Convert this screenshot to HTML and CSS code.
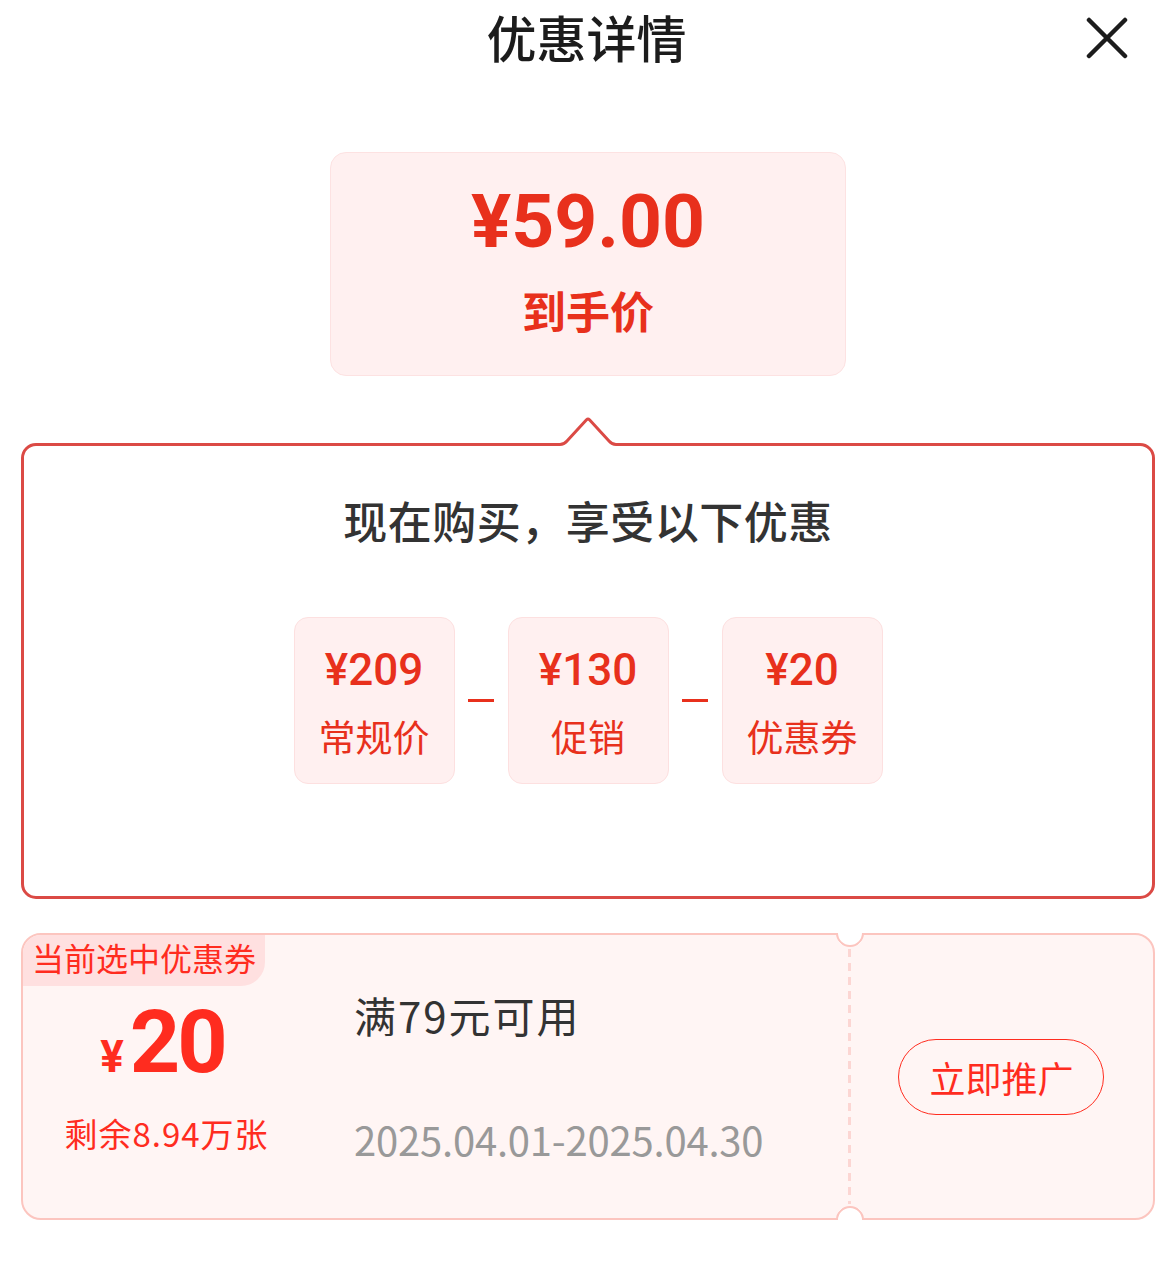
FILE: index.html
```html
<!DOCTYPE html>
<html lang="zh-CN">
<head>
<meta charset="UTF-8" />
<meta name="viewport" content="width=device-width, initial-scale=1" />
<title>优惠详情</title>
<link rel="stylesheet" href="styles.css">
</head>
<body>

<div class="sheet">
  <header class="sheet-header">
    <span></span>
    <h1 class="sheet-title">优惠详情</h1>
    <button class="close-btn" aria-label="关闭">
      <svg width="42" height="42" viewBox="0 0 42 42">
        <path d="M3 3 L39 39 M39 3 L3 39" stroke="#1c1c1c" stroke-width="4.5" stroke-linecap="round" fill="none" />
      </svg>
    </button>
  </header>

  <div class="content">
    <div class="final-price">
      <div class="final-amount">¥59.00</div>
      <div class="final-label">到手价</div>
    </div>

    <div class="breakdown">
      <svg class="breakdown-notch" width="72" height="30" viewBox="0 0 72 30">
        <path d="M0 30 V27.5 H8 Q12 27.5 15 24 L34.5 2.8 Q36 1.3 37.5 2.8 L57 24 Q60 27.5 64 27.5 H72 V30 Z" fill="#fff" />
        <path d="M0 27.5 H8 Q12 27.5 15 24 L34.5 2.8 Q36 1.3 37.5 2.8 L57 24 Q60 27.5 64 27.5 H72" fill="none" stroke="#db4a45" stroke-width="3" />
      </svg>
      <h2 class="breakdown-title">现在购买，享受以下优惠</h2>
      <div class="breakdown-row">
        <div class="item">
          <div class="item-amount">¥209</div>
          <div class="item-label">常规价</div>
        </div>
        <div class="minus"></div>
        <div class="item">
          <div class="item-amount">¥130</div>
          <div class="item-label">促销</div>
        </div>
        <div class="minus"></div>
        <div class="item">
          <div class="item-amount">¥20</div>
          <div class="item-label">优惠券</div>
        </div>
      </div>
    </div>

    <div class="coupon">
      <div class="coupon-main">
        <div class="coupon-tag">当前选中优惠券</div>
        <div class="coupon-body">
          <div class="coupon-value">
            <div class="coupon-amount"><span class="coupon-yen">¥</span>20</div>
            <div class="coupon-left">剩余8.94万张</div>
          </div>
          <div class="coupon-info">
            <div class="coupon-rule">满79元可用</div>
            <div class="coupon-date">2025.04.01-2025.04.30</div>
          </div>
        </div>
      </div>
      <div class="coupon-stub">
        <span class="notch notch-top"></span>
        <span class="notch notch-bottom"></span>
        <button class="promote-btn">立即推广</button>
      </div>
    </div>
  </div>
</div>

</body>
</html>
```

FILE: styles.css
```css
body {
  margin: 0;
  background: #fff;
  font-family: "Noto Sans CJK SC", "Noto Sans", sans-serif;
  color: #333;
}
.sheet {
  width: 1173px;
}
.sheet-header {
  height: 80px;
  display: grid;
  grid-template-columns: 1fr auto 1fr;
  align-items: start;
}
.sheet-title {
  margin: 11px 0 0;
  font-size: 50px;
  line-height: 1;
  font-weight: 500;
  color: #1c1c1c;
}
.close-btn {
  justify-self: end;
  margin: 17px 45px 0 0;
  padding: 0;
  border: none;
  background: none;
  cursor: pointer;
  width: 42px;
  height: 42px;
}
.close-btn svg {
  display: block;
}
.content {
  padding: 0 18px 0 21px;
}

/* final price */
.final-price {
  box-sizing: border-box;
  width: 516px;
  height: 224px;
  margin: 72px auto 0;
  padding-top: 31px;
  background: #fff0f0;
  border: 1px solid #fde2e2;
  border-radius: 16px;
  text-align: center;
  color: #e8301c;
}
.final-amount {
  font-family: Roboto, "Noto Sans", sans-serif;
  font-size: 75px;
  line-height: 1;
  font-weight: 700;
}
.final-label {
  margin-top: 29px;
  font-size: 44px;
  line-height: 1;
  font-weight: 700;
}

/* breakdown */
.breakdown {
  position: relative;
  box-sizing: border-box;
  height: 456px;
  margin-top: 67px;
  padding-top: 52px;
  border: 3px solid #db4a45;
  border-radius: 15px;
}
.breakdown-notch {
  position: absolute;
  top: -29px;
  left: 50%;
  margin-left: -36px;
  display: block;
}
.breakdown-title {
  margin: 0;
  font-size: 44px;
  line-height: 1;
  font-weight: 500;
  letter-spacing: 0.5px;
  text-align: center;
  color: #333;
}
.breakdown-row {
  display: flex;
  justify-content: center;
  align-items: center;
  margin-top: 75px;
}
.item {
  box-sizing: border-box;
  width: 161px;
  height: 167px;
  padding-top: 30px;
  background: #fff0f0;
  border: 1px solid #fde0e0;
  border-radius: 14px;
  text-align: center;
  color: #e8301c;
}
.item-amount {
  font-family: Roboto, "Noto Sans", sans-serif;
  font-size: 44px;
  line-height: 1;
  font-weight: 500;
}
.item-label {
  margin-top: 26px;
  font-size: 37px;
  line-height: 1;
}
.minus {
  width: 53px;
  display: flex;
  justify-content: center;
}
.minus::before {
  content: "";
  width: 26px;
  height: 3px;
  background: #e8301c;
}

/* coupon */
.coupon {
  box-sizing: border-box;
  height: 287px;
  margin-top: 34px;
  display: flex;
  background: #fff5f4;
  border: 2px solid #fcc5bf;
  border-radius: 20px;
}
.coupon-main {
  flex: 1;
  display: flex;
  flex-direction: column;
  align-items: flex-start;
}
.coupon-tag {
  box-sizing: border-box;
  height: 51px;
  padding: 0 9px 0 9px;
  line-height: 45px;
  font-size: 32px;
  color: #ff2c1f;
  background: #ffe0e0;
  border-radius: 18px 0 24px 0;
}
.coupon-body {
  display: flex;
  align-items: flex-start;
}
.coupon-value {
  width: 287px;
  margin-top: 12px;
  text-align: center;
  color: #ff2c1f;
}
.coupon-amount {
  font-family: Roboto, "Noto Sans", sans-serif;
  font-size: 88px;
  line-height: 1;
  font-weight: 700;
  letter-spacing: -3px;
  padding-right: 8px;
}
.coupon-yen {
  font-size: 44px;
  letter-spacing: 0;
  margin-right: 6px;
}
.coupon-left {
  margin-top: 31px;
  font-size: 33px;
  line-height: 1;
  letter-spacing: 1px;
}
.coupon-info {
  margin: 8px 0 0 44px;
}
.coupon-rule {
  font-size: 42px;
  line-height: 1;
  letter-spacing: 2px;
  color: #333;
}
.coupon-date {
  margin-top: 83px;
  font-size: 40px;
  line-height: 1;
  letter-spacing: -0.2px;
  color: #999;
}
.coupon-stub {
  position: relative;
  width: 305px;
  display: flex;
  justify-content: center;
  align-items: center;
}
.coupon-stub::before {
  content: "";
  position: absolute;
  left: 0;
  top: 14px;
  bottom: 14px;
  width: 3px;
  background: repeating-linear-gradient(to bottom, #fcd6d3 0 8px, transparent 8px 14px);
}
.notch {
  position: absolute;
  left: -12px;
  box-sizing: border-box;
  width: 28px;
  height: 28px;
  border: 2px solid;
  border-color: transparent transparent #fcc5bf #fcc5bf;
  border-radius: 50%;
  background: #fff;
}
.notch-top {
  top: -16px;
  transform: rotate(-45deg);
}
.notch-bottom {
  bottom: -16px;
  transform: rotate(135deg);
}
.promote-btn {
  box-sizing: border-box;
  width: 206px;
  height: 76px;
  padding: 0 0 0 2px;
  border: 1.5px solid #ff2c1f;
  border-radius: 38px;
  background: transparent;
  font-family: "Noto Sans CJK SC", sans-serif;
  font-size: 36px;
  color: #ff2c1f;
  cursor: pointer;
}
```
